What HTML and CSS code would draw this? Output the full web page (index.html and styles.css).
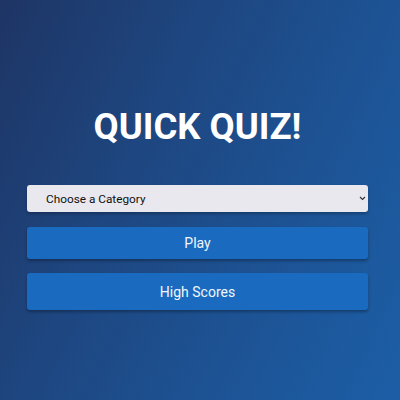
FILE: index.html
```html
<!DOCTYPE html>
<html>
<head>
<meta charset="utf-8">
<link rel="stylesheet" href="styles.css">
</head>
<body>
<main class="home">
  <h1 class="title">QUICK QUIZ!</h1>
  <div class="select-wrap">
    <select class="category">
      <option>Choose a Category</option>
    </select>
    <svg class="chevron" width="7" height="5" viewBox="0 0 7 5"><path d="M1 1 L3.5 3.5 L6 1" fill="none" stroke="#333" stroke-width="1.1"/></svg>
  </div>
  <button class="btn btn-play">Play</button>
  <button class="btn btn-scores">High Scores</button>
</main>
</body>
</html>
```
FILE: styles.css
```css
html, body {
  margin: 0;
  height: 100%;
}
body {
  background: linear-gradient(115deg, #1e3565 0%, #1e4680 35%, #1d5496 70%, #1c5ea6 100%);
  font-family: Roboto, "Liberation Sans", sans-serif;
}
.home {
  width: 341px;
  margin-left: 27px;
  padding-top: 106px;
  display: flex;
  flex-direction: column;
}
.title {
  margin: 0 0 37px;
  text-align: center;
  color: #ffffff;
  font-size: 36.5px;
  font-weight: 700;
  line-height: 42px;
}
.select-wrap {
  position: relative;
  margin-bottom: 15px;
}
.category {
  appearance: none;
  -webkit-appearance: none;
  width: 100%;
  height: 27px;
  border: none;
  border-radius: 3px;
  background: #e9e8ee;
  color: #111;
  font-family: Roboto, "Liberation Sans", sans-serif;
  font-size: 11.8px;
  padding: 0 0 0 19px;
  box-shadow: 0 2px 3px rgba(0,0,0,0.25);
  display: block;
}
.chevron {
  position: absolute;
  right: 2px;
  top: 11px;
}
.btn {
  border: none;
  border-radius: 3px;
  background: #1a6bc0;
  color: #f2f6fb;
  font-family: Roboto, "Liberation Sans", sans-serif;
  font-size: 14px;
  width: 100%;
  box-shadow: 0 2px 3px rgba(0,0,0,0.3);
  padding: 0;
}
.btn-play {
  height: 32px;
  margin-bottom: 14px;
}
.btn-scores {
  height: 37px;
}
```
